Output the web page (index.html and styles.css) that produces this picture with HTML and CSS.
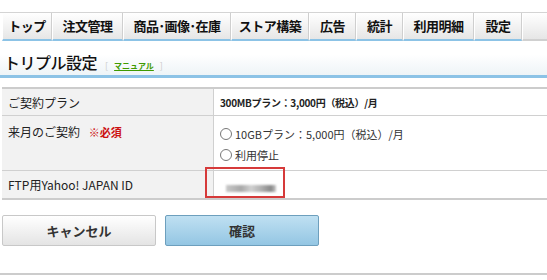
FILE: index.html
```html
<!DOCTYPE html>
<html lang="ja">
<head>
    <meta charset="UTF-8">
    <meta name="viewport" content="width=device-width, initial-scale=1.0">
    <title>トリプル設定</title>
    <link rel="stylesheet" href="styles.css">
</head>
<body>
    <ul class="tabs">
        <li>トップ</li>
        <li>注文管理</li>
        <li>商品･画像･在庫</li>
        <li>ストア構築</li>
        <li>広告</li>
        <li>統計</li>
        <li>利用明細</li>
        <li>設定</li>
        <li class="blank"></li>
    </ul>

    <div class="title">
        <h1>トリプル設定</h1>
        <span class="manual">[ <a href="#">マニュアル</a> ]</span>
    </div>

    <div class="form-area">
        <table class="settings">
            <tr>
                <th>ご契約プラン</th>
                <td class="plan">300MBプラン：3,000円（税込）/月</td>
            </tr>
            <tr class="next">
                <th>来月のご契約 <span class="required">※必須</span></th>
                <td>
                    <label class="option"><span class="radio"></span>10GBプラン：5,000円（税込）/月</label>
                    <label class="option"><span class="radio"></span>利用停止</label>
                </td>
            </tr>
            <tr>
                <th>FTP用Yahoo! JAPAN ID</th>
                <td><span class="blur-id"></span></td>
            </tr>
        </table>
        <!-- annotation box over the id cell -->
        <div class="highlight"></div>
    </div>

    <div class="buttons">
        <button class="btn cancel">キャンセル</button>
        <button class="btn confirm">確認</button>
    </div>

    <div class="footer-line"></div>
</body>
</html>
```

FILE: styles.css
```css
body {
    margin: 0;
    font-family: "Noto Sans CJK JP", "DejaVu Sans", sans-serif;
    color: #222;
    background: #fff;
    width: 547px;
    overflow: hidden;
}

/* top navigation */
.tabs {
    list-style: none;
    margin: 12px 0 0 0;
    padding: 0 0 0 2px;
    display: flex;
    border-top: 1px solid #d4d4d4;
    height: 28px;
}

.tabs li {
    height: 26px;
    line-height: 25px;
    text-align: center;
    font-size: 13px;
    font-weight: bold;
    letter-spacing: -0.5px;
    color: #111;
    background: linear-gradient(#ffffff, #e6e6e6);
    border-right: 1px solid #cfcfcf;
    border-left: 1px solid #fff;
    border-bottom: 2px solid #8cc3e6;
    box-sizing: content-box;
}

.tabs li:nth-child(1) { width: 48px; }
.tabs li:nth-child(2) { width: 69px; }
.tabs li:nth-child(3) { width: 106px; }
.tabs li:nth-child(4) { width: 76px; }
.tabs li:nth-child(5) { width: 45px; }
.tabs li:nth-child(6) { width: 45px; }
.tabs li:nth-child(7) { width: 69px; }
.tabs li:nth-child(8) { width: 46px; }

.tabs li.blank {
    flex: 1;
    border-right: none;
    border-bottom: 2px solid #d0d0d0;
}

/* page title */
.title {
    display: flex;
    align-items: baseline;
    height: 37px;
    padding: 0 0 0 4px;
    background: linear-gradient(#ffffff 40%, #eef4f7);
    border-bottom: 3px solid #8cc3e6;
    box-sizing: border-box;
    margin-bottom: 9px;
}

.title h1 {
    margin: 9px 8px 0 0;
    font-size: 16px;
    font-weight: 500;
    letter-spacing: -0.5px;
    color: #111;
}

.manual {
    font-size: 9px;
    color: #ccc;
}

.manual a {
    color: #3f9a00;
    font-weight: bold;
    font-size: 8px;
    padding: 0 4px;
}

/* settings table */
.form-area {
    position: relative;
    padding-left: 2px;
}

.settings {
    width: 100%;
    border-collapse: collapse;
    border-top: 2px solid #cccccc;
    border-bottom: 2px solid #cccccc;
}

.settings th,
.settings td {
    border-bottom: 1px solid #d0d0d0;
    text-align: left;
    vertical-align: middle;
}

.settings th {
    width: 205px;
    padding: 0 0 0 6px;
    background: #f2f2f2;
    border-right: 1px solid #d0d0d0;
    font-size: 12px;
    font-weight: normal;
    color: #222;
    height: 26px;
}

.settings td {
    padding: 0 0 0 6px;
    font-size: 11px;
}

.settings td.plan {
    font-size: 10px;
    font-weight: bold;
    letter-spacing: -0.3px;
}

.settings tr.next th {
    vertical-align: top;
    padding-top: 7px;
    height: 47px;
}

.settings tr.next td {
    padding-top: 2px;
}

.required {
    color: #cc1111;
    font-weight: bold;
    font-size: 11px;
    margin-left: 6px;
}

.option {
    display: flex;
    align-items: center;
    height: 21px;
    color: #333;
}

.radio {
    width: 10px;
    height: 10px;
    border: 1px solid #777;
    border-radius: 50%;
    margin-right: 3px;
    background: #fff;
}

.blur-id {
    display: inline-block;
    width: 50px;
    height: 7px;
    margin: 11px 0 0 6px;
    background: linear-gradient(90deg, #c8c8c8, #a8a8a8 30%, #d0d0d0 50%, #b0b0b0 70%, #888 90%, #c8c8c8);
    filter: blur(1px);
}

.settings tr:last-child th {
    height: 27px;
}

.highlight {
    position: absolute;
    left: 205px;
    top: 80px;
    width: 76px;
    height: 27px;
    border: 2px solid #d63a3a;
}

/* buttons */
.buttons {
    display: flex;
    gap: 9px;
    padding: 15px 0 0 2px;
}

.btn {
    width: 154px;
    height: 31px;
    font-family: inherit;
    font-size: 13px;
    font-weight: bold;
    color: #333;
    border-radius: 2px;
    cursor: pointer;
}

.cancel {
    background: linear-gradient(#ffffff, #e4e4e4);
    border: 1px solid #c8c8c8;
}

.confirm {
    background: linear-gradient(#bfe0f2, #94c6e3);
    border: 1px solid #6d9fbd;
}

.footer-line {
    margin-top: 27px;
    border-top: 2px solid #cccccc;
}
```
